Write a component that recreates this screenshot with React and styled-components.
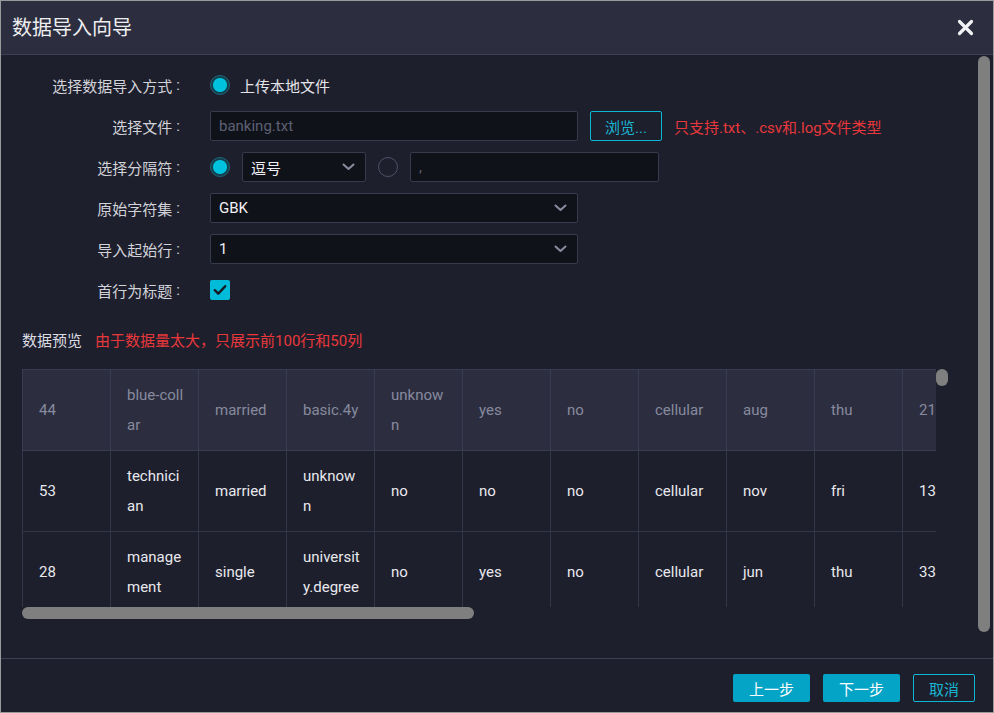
import React from "react";
import styled, { createGlobalStyle } from "styled-components";

const GlobalStyle = createGlobalStyle`
  html, body {
    margin: 0;
    padding: 0;
    background: #1e1f2c;
  }
  * {
    box-sizing: border-box;
  }
`;

const HEAD = ["44", "blue-collar", "married", "basic.4y", "unknown", "yes", "no", "cellular", "aug", "thu", "210", "1", "999", "0", "nonexistent", "1.4", "93.444", "-36.1", "4.963", "5228.1", "0"];

const ROWS = [
  ["53", "technician", "married", "unknown", "no", "no", "no", "cellular", "nov", "fri", "138", "1", "999", "0", "nonexistent", "-0.1", "93.2", "-42", "4.021", "5195.8", "0"],
  ["28", "management", "single", "university.degree", "no", "yes", "no", "cellular", "jun", "thu", "339", "3", "6", "2", "success", "-1.7", "94.055", "-39.8", "0.729", "4991.6", "1"],
  ["39", "services", "married", "high.school", "no", "no", "no", "cellular", "apr", "fri", "185", "2", "999", "0", "nonexistent", "-1.8", "93.075", "-47.1", "1.405", "5099.1", "0"],
];

const PREVIEW = ROWS.slice(0, 3);

function Chevron() {
  return (
    <svg width="13" height="8" viewBox="0 0 13 8">
      <polyline
        points="1.5,1.5 6.5,6 11.5,1.5"
        fill="none"
        stroke="#8a8c9f"
        strokeWidth="2"
        strokeLinecap="round"
        strokeLinejoin="round"
      />
    </svg>
  );
}

function Select({ value, width }) {
  return (
    <SelectBox $width={width}>
      <span>{value}</span>
      <Chevron />
    </SelectBox>
  );
}

export default function App() {
  return (
    <>
      <GlobalStyle />
      <Dialog>
        <Header>
          <Title>数据导入向导</Title>
          <Close aria-label="close">
            <svg width="17" height="17" viewBox="0 0 17 17">
              <path
                d="M2.5 2.5 L14.5 14.5 M14.5 2.5 L2.5 14.5"
                stroke="#f2f2f4"
                strokeWidth="3.2"
                strokeLinecap="round"
              />
            </svg>
          </Close>
        </Header>

        <BodyFrame>
          <Body>
            <Form>
              <Label>选择数据导入方式</Label>
              <Field>
                <Radio $checked />
                <OptionText>上传本地文件</OptionText>
              </Field>

              <Label>选择文件</Label>
              <Field>
                <TextInput $width={368} $muted>banking.txt</TextInput>
                <OutlineButton $width={72} $height={30}>浏览...</OutlineButton>
                <Hint>只支持.txt、.csv和.log文件类型</Hint>
              </Field>

              <Label>选择分隔符</Label>
              <Field>
                <Radio $checked />
                <Select value="逗号" width={124} />
                <Radio />
                <TextInput $width={249} $muted>,</TextInput>
              </Field>

              <Label>原始字符集</Label>
              <Field>
                <Select value="GBK" width={368} />
              </Field>

              <Label>导入起始行</Label>
              <Field>
                <Select value="1" width={368} />
              </Field>

              <Label>首行为标题</Label>
              <Field>
                <Checkbox>
                  <svg width="14" height="12" viewBox="0 0 14 12">
                    <polyline
                      points="1.8,6.2 5.3,9.6 12.2,2.2"
                      fill="none"
                      stroke="#161822"
                      strokeWidth="2.4"
                      strokeLinecap="round"
                      strokeLinejoin="round"
                    />
                  </svg>
                </Checkbox>
              </Field>
            </Form>

            <PreviewTitle>
              <strong>数据预览</strong>
              <Hint>由于数据量太大，只展示前100行和50列</Hint>
            </PreviewTitle>

            <TableFrame>
              <TableViewport>
                <Table>
                  <colgroup>
                    {HEAD.map((_, i) => (
                      <col key={i} />
                    ))}
                  </colgroup>
                  <thead>
                    <tr>
                      {HEAD.map((c, i) => (
                        <HeadCell key={i}>{c}</HeadCell>
                      ))}
                    </tr>
                  </thead>
                  <tbody>
                    {PREVIEW.map((row, r) => (
                      <tr key={r}>
                        {row.map((c, i) => (
                          <Cell key={i}>{c}</Cell>
                        ))}
                      </tr>
                    ))}
                  </tbody>
                </Table>
              </TableViewport>
              <HThumb />
              <VThumb />
            </TableFrame>
          </Body>
          <BodyThumb />
        </BodyFrame>

        <Footer>
          <FilledButton>上一步</FilledButton>
          <FilledButton>下一步</FilledButton>
          <OutlineButton $width={62} $height={28}>取消</OutlineButton>
        </Footer>
      </Dialog>
    </>
  );
}

const Dialog = styled.div`
  width: 994px;
  height: 713px;
  display: flex;
  flex-direction: column;
  background: #1e1f2c;
  border: 1px solid #9a9a9c;
  font-family: Roboto, "Noto Sans CJK SC", sans-serif;
  font-size: 15px;
  color: #d4d5da;
  overflow: hidden;
`;

const Header = styled.div`
  height: 54px;
  flex: none;
  display: flex;
  align-items: center;
  justify-content: space-between;
  padding: 0 19px 2px 11px;
  background: #2c2e40;
  border-bottom: 1px solid #3d3f54;
`;

const Title = styled.h1`
  margin: 0;
  font-size: 20px;
  font-weight: 400;
  color: #eeeef0;
`;

const Close = styled.span`
  display: flex;
  margin-top: 2px;
`;

const BodyFrame = styled.div`
  position: relative;
  flex: 1;
  overflow: hidden;
`;

const Body = styled.div`
  height: 100%;
  padding: 15px 30px 0 21px;
`;

const Thumb = styled.span`
  position: absolute;
  background: #7f7f80;
  border-radius: 6px;
`;

const BodyThumb = styled(Thumb)`
  top: 1px;
  right: 3px;
  width: 12px;
  height: 576px;
`;

const Form = styled.div`
  display: grid;
  grid-template-columns: 158px 1fr;
  column-gap: 30px;
  row-gap: 11px;
`;

const Label = styled.div`
  height: 30px;
  display: flex;
  align-items: center;
  justify-content: flex-end;
  color: #d2d3d9;
  white-space: nowrap;

  &::after {
    content: ":";
    margin-left: 4px;
  }
`;

const Field = styled.div`
  height: 30px;
  display: flex;
  align-items: center;
  gap: 12px;
`;

const Radio = styled.span`
  width: 20px;
  height: 20px;
  flex: none;
  border-radius: 50%;
  border: 1.5px solid ${(p) => (p.$checked ? "#1f6779" : "#4e5168")};
  background: ${(p) =>
    p.$checked
      ? "radial-gradient(circle, #00c1de 0 6.5px, #123f4c 7.5px)"
      : "transparent"};
`;

const OptionText = styled.span`
  color: #e4e5ea;
  margin-left: -2px;
`;

const TextInput = styled.div`
  width: ${(p) => p.$width}px;
  height: 30px;
  flex: none;
  display: flex;
  align-items: center;
  padding: 0 8px;
  background: #10121a;
  border: 1px solid #383a4e;
  border-radius: 2px;
  color: ${(p) => (p.$muted ? "#5d6073" : "#eeeef2")};
`;

const SelectBox = styled.div`
  width: ${(p) => p.$width}px;
  height: 30px;
  flex: none;
  display: flex;
  align-items: center;
  justify-content: space-between;
  padding: 0 10px 0 8px;
  background: #10121a;
  border: 1px solid #383a4e;
  border-radius: 2px;
  color: #f0f0f4;
`;

const Checkbox = styled.span`
  width: 20px;
  height: 20px;
  display: flex;
  align-items: center;
  justify-content: center;
  background: #00bcd8;
  border-radius: 2px;
`;

const Hint = styled.span`
  color: #e8383b;
`;

const OutlineButton = styled.button`
  width: ${(p) => p.$width}px;
  height: ${(p) => p.$height}px;
  flex: none;
  padding: 0;
  font: inherit;
  color: #18b6d2;
  background: transparent;
  border: 1px solid #0cb7d6;
  border-radius: 2px;
`;

const FilledButton = styled.button`
  width: 77px;
  height: 28px;
  padding: 0;
  font: inherit;
  color: #ffffff;
  background: #04a4c6;
  border: none;
  border-radius: 2px;
`;

const PreviewTitle = styled.div`
  display: flex;
  gap: 13px;
  margin-top: 26px;
  line-height: 20px;

  strong {
    font-weight: 400;
    color: #dcdde2;
  }
`;

const TableFrame = styled.div`
  position: relative;
  margin-top: 18px;
  width: 926px;
  height: 250px;
  padding: 0 12px 12px 0;
`;

const TableViewport = styled.div`
  width: 100%;
  height: 100%;
  overflow: hidden;
`;

const HThumb = styled(Thumb)`
  left: 0;
  bottom: 0;
  width: 452px;
  height: 12px;
`;

const VThumb = styled(Thumb)`
  top: 0;
  right: 0;
  width: 12px;
  height: 17px;
`;

const Table = styled.table`
  width: 1848px;
  table-layout: fixed;
  border-collapse: collapse;

  col {
    width: 88px;
  }
`;

const HeadCell = styled.th`
  height: 81px;
  padding: 10px 13px 10px 16px;
  text-align: left;
  font-weight: 400;
  line-height: 30px;
  color: #878a9e;
  background: #2c2e40;
  border: 1px solid #3a3c51;
  word-break: break-all;
`;

const Cell = styled.td`
  height: 81px;
  padding: 10px 13px 10px 16px;
  line-height: 30px;
  color: #e8e9ee;
  border: 1px solid #34364a;
  word-break: break-all;
`;

const Footer = styled.div`
  height: 54px;
  flex: none;
  display: flex;
  justify-content: flex-end;
  align-items: flex-start;
  gap: 13px;
  padding: 15px 18px 0 0;
  border-top: 1px solid #3d3f54;
`;
